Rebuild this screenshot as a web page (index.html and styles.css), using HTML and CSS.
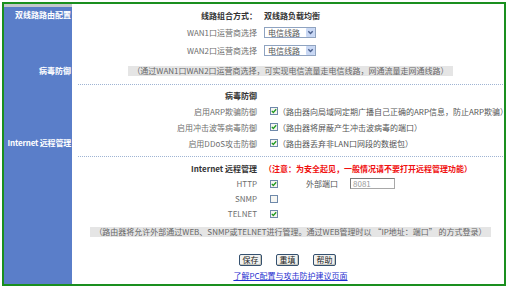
FILE: index.html
```html
<!DOCTYPE html>
<html lang="zh-CN">
<head>
    <meta charset="UTF-8">
    <meta name="viewport" content="width=device-width, initial-scale=1.0">
    <title>双线路路由配置</title>
    <link rel="stylesheet" href="styles.css">
</head>
<body>
    <div class="frame">
        <div class="side">
            <div class="side-cap"></div>
            <div class="side-label first">双线路路由配置</div>
            <div class="side-label virus">病毒防御</div>
            <div class="side-label remote">Internet 远程管理</div>
        </div>
        <div class="main">
            <div class="row r16 top">
                <span class="lbl head">线路组合方式：</span>
                <span class="val head">双线路负载均衡</span>
            </div>
            <div class="row r18">
                <span class="lbl">WAN1口运营商选择</span>
                <span class="val">
                    <span class="sel"><span class="sel-text">电信线路</span><svg class="sel-arrow" width="9" height="9" viewBox="0 0 9 9"><rect width="9" height="9" rx="1" fill="#c9d8f4"/><path d="M2.3 3.3 L4.5 5.6 L6.7 3.3" fill="none" stroke="#4a5f8c" stroke-width="1.4"/></svg></span>
                </span>
            </div>
            <div class="row r18">
                <span class="lbl">WAN2口运营商选择</span>
                <span class="val">
                    <span class="sel"><span class="sel-text">电信线路</span><svg class="sel-arrow" width="9" height="9" viewBox="0 0 9 9"><rect width="9" height="9" rx="1" fill="#c9d8f4"/><path d="M2.3 3.3 L4.5 5.6 L6.7 3.3" fill="none" stroke="#4a5f8c" stroke-width="1.4"/></svg></span>
                </span>
            </div>
            <div class="note-wrap first-note">
                <span class="note">（通过WAN1口WAN2口运营商选择，可实现电信流量走电信线路，网通流量走网通线路）</span>
            </div>

            <div class="sep sep-one"></div>

            <div class="group virus-group">
                <div class="row r16">
                    <span class="lbl head">病毒防御</span>
                    <span class="val"></span>
                </div>
                <div class="row r16">
                    <span class="lbl">启用ARP欺骗防御</span>
                    <span class="val">
                        <svg class="chk" width="8" height="8" viewBox="0 0 8 8"><rect x="0.5" y="0.5" width="7" height="7" fill="#f6f6f2" stroke="#6f89aa"/><path d="M1.8 3.9 L3.3 5.5 L6.2 2.3" fill="none" stroke="#1f9a1f" stroke-width="1.3"/></svg>
                        <span class="desc">（路由器向局域网定期广播自己正确的ARP信息，防止ARP欺骗）</span>
                    </span>
                </div>
                <div class="row r16">
                    <span class="lbl">启用冲击波等病毒防御</span>
                    <span class="val">
                        <svg class="chk" width="8" height="8" viewBox="0 0 8 8"><rect x="0.5" y="0.5" width="7" height="7" fill="#f6f6f2" stroke="#6f89aa"/><path d="M1.8 3.9 L3.3 5.5 L6.2 2.3" fill="none" stroke="#1f9a1f" stroke-width="1.3"/></svg>
                        <span class="desc">（路由器将屏蔽产生冲击波病毒的端口）</span>
                    </span>
                </div>
                <div class="row r16">
                    <span class="lbl">启用DDoS攻击防御</span>
                    <span class="val">
                        <svg class="chk" width="8" height="8" viewBox="0 0 8 8"><rect x="0.5" y="0.5" width="7" height="7" fill="#f6f6f2" stroke="#6f89aa"/><path d="M1.8 3.9 L3.3 5.5 L6.2 2.3" fill="none" stroke="#1f9a1f" stroke-width="1.3"/></svg>
                        <span class="desc">（路由器丢弃非LAN口网段的数据包）</span>
                    </span>
                </div>
            </div>

            <div class="sep sep-two"></div>

            <div class="group remote-group">
                <div class="row r15">
                    <span class="lbl head">Internet 远程管理</span>
                    <span class="val warn">（注意：为安全起见，一般情况请不要打开远程管理功能）</span>
                </div>
                <div class="row r15">
                    <span class="lbl">HTTP</span>
                    <span class="val">
                        <svg class="chk" width="8" height="8" viewBox="0 0 8 8"><rect x="0.5" y="0.5" width="7" height="7" fill="#f6f6f2" stroke="#6f89aa"/><path d="M1.8 3.9 L3.3 5.5 L6.2 2.3" fill="none" stroke="#1f9a1f" stroke-width="1.3"/></svg>
                        <span class="port-label">外部端口</span>
                        <span class="port">8081</span>
                    </span>
                </div>
                <div class="row r15">
                    <span class="lbl">SNMP</span>
                    <span class="val">
                        <svg class="chk" width="8" height="8" viewBox="0 0 8 8"><rect x="0.5" y="0.5" width="7" height="7" fill="#f6f6f2" stroke="#6f89aa"/></svg>
                    </span>
                </div>
                <div class="row r15">
                    <span class="lbl">TELNET</span>
                    <span class="val">
                        <svg class="chk" width="8" height="8" viewBox="0 0 8 8"><rect x="0.5" y="0.5" width="7" height="7" fill="#f6f6f2" stroke="#6f89aa"/><path d="M1.8 3.9 L3.3 5.5 L6.2 2.3" fill="none" stroke="#1f9a1f" stroke-width="1.3"/></svg>
                    </span>
                </div>
            </div>

            <div class="note-wrap second-note">
                <span class="note">（路由器将允许外部通过WEB、SNMP或TELNET进行管理。通过WEB管理时以 “IP地址：端口” 的方式登录）</span>
            </div>

            <div class="buttons">
                <button class="btn">保存</button>
                <button class="btn">重填</button>
                <button class="btn">帮助</button>
            </div>
            <div class="link-row">
                <a href="#">了解PC配置与攻击防护建议页面</a>
            </div>
        </div>
    </div>
</body>
</html>
```

FILE: styles.css
```css
body {
    margin: 0;
    padding: 0;
    background-color: #fff;
    font-family: "Noto Sans CJK SC", "Liberation Sans", sans-serif;
    font-size: 8px;
    color: #666;
}

.frame {
    display: flex;
    width: 500px;
    height: 280px;
    margin: 2px 0 0 2px;
    border: 2px solid #1a8f1f;
}

/* left column */
.side {
    width: 68px;
    flex-shrink: 0;
    background-color: #5a7ec9;
    display: flex;
    flex-direction: column;
}

.side-cap {
    height: 3px;
    background-color: #c4c7cd;
}

.side-label {
    height: 16px;
    line-height: 16px;
    padding-right: 1px;
    text-align: right;
    color: #fff;
    font-weight: bold;
    font-size: 8px;
    white-space: nowrap;
}

.side-label.remote {
    margin-top: 56px;
    letter-spacing: -0.2px;
}

.side-label.virus {
    margin-top: 40px;
}

/* main column */
.main {
    flex: 1;
    padding: 3px 1px 0 6px;
    min-width: 0;
}

.row {
    display: grid;
    grid-template-columns: 179px 1fr;
    column-gap: 7px;
    align-items: center;
    white-space: nowrap;
}

.r15 { height: 15px; }
.r16 { height: 16px; }
.r18 { height: 18px; }

.lbl {
    text-align: right;
    color: #6e6e6e;
}

.head {
    color: #333;
    font-weight: bold;
}

.val {
    display: flex;
    align-items: center;
}

.sel {
    display: flex;
    align-items: center;
    justify-content: space-between;
    width: 50px;
    height: 9px;
    border: 1px solid #8fa3c0;
    background-color: #fff;
}

.sel-text {
    padding-left: 3px;
    line-height: 9px;
    color: #555;
}

.chk {
    margin-left: 6px;
    flex-shrink: 0;
}

.desc {
    color: #555;
}

.warn {
    color: #f01010;
    font-weight: bold;
}

.port-label {
    margin-left: 28px;
    color: #555;
}

.port {
    width: 41px;
    height: 9px;
    line-height: 9px;
    margin-left: 12px;
    padding-left: 2px;
    border: 1px solid #a8a8a8;
    border-top-color: #7a7a7a;
    border-left-color: #7a7a7a;
    color: #999;
}

.note-wrap {
    text-align: center;
    white-space: nowrap;
}

.note {
    display: inline-block;
    height: 10px;
    line-height: 10px;
    padding: 0 4px;
    background-color: #e5e5e5;
    color: #666;
}

.first-note {
    margin-top: 6px;
}

.second-note {
    margin-top: 5px;
}

.sep {
    border-top: 1px dotted #9fb4d3;
}

.sep-one {
    margin-top: 8px;
}

.virus-group {
    margin-top: 2px;
}

.sep-two {
    margin-top: 5px;
}

.remote-group {
    margin-top: 4px;
}

.buttons {
    display: flex;
    justify-content: center;
    gap: 14px;
    margin-top: 17px;
    padding-right: 6px;
}

.btn {
    width: 23px;
    height: 12px;
    padding: 0;
    border: 1px solid #34506f;
    border-radius: 2px;
    background-color: #f2f2f0;
    box-shadow: inset -1px -1px 0 #c9c7bc;
    font-family: "Noto Sans CJK SC", sans-serif;
    font-size: 8px;
    line-height: 10px;
    color: #222;
}

.link-row {
    margin-top: 5px;
    text-align: center;
    line-height: 10px;
}

a {
    color: #1f2fd0;
}
```
